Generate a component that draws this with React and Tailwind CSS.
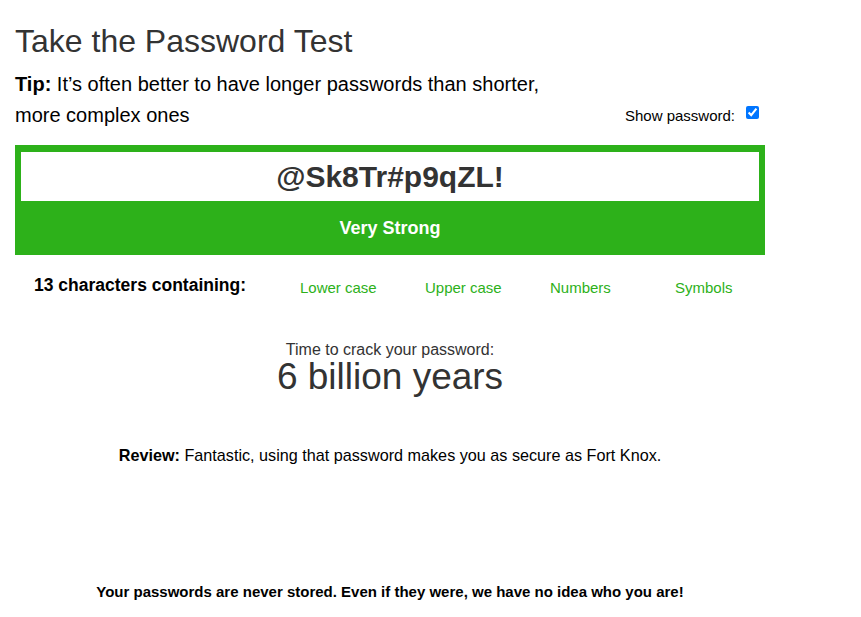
import React, { useState } from 'react';

const checks = ['Lower case', 'Upper case', 'Numbers', 'Symbols'];

const App = () => {
    const [password, setPassword] = useState('@Sk8Tr#p9qZL!');
    const [show, setShow] = useState(true);

    return (
        <div className="bg-white min-h-screen text-[#333] font-['Liberation_Sans',Arial,sans-serif]">
            <div className="w-[750px] ml-[15px] pt-[21px]">
                <h1 className="text-[32px] leading-[40px] text-[#333]">Take the Password Test</h1>

                <div className="flex items-end justify-between mt-[8px]">
                    <p className="text-[20px] leading-[31px] text-black w-[540px]">
                        <strong>Tip:</strong> It’s often better to have longer passwords than shorter, more complex ones
                    </p>
                    <label className="flex items-center gap-[11px] text-[15px] text-black mr-[6px] mb-[4px]">
                        Show password:
                        <input
                            type="checkbox"
                            checked={show}
                            onChange={() => setShow(!show)}
                            className="w-[13px] h-[13px] accent-[#0075ff] mb-[7px]"
                        />
                    </label>
                </div>

                <div className="mt-[14px] bg-[#2db11a] px-[6px] pt-[7px]">
                    <input
                        type={show ? 'text' : 'password'}
                        value={password}
                        onChange={(e) => setPassword(e.target.value)}
                        className="w-full h-[49px] bg-white text-center text-[30px] font-bold text-[#333] outline-none"
                    />
                    <div className="h-[54px] flex items-center justify-center text-white font-bold text-[18px]">
                        Very Strong
                    </div>
                </div>

                <div className="flex items-start mt-[17px]">
                    <div className="w-[285px] shrink-0 pl-[19px] text-[17.5px] font-bold text-black">
                        {password.length} characters containing:
                    </div>
                    <div className="flex text-[15px] text-[#2db11a] mt-[5px]">
                        {checks.map((c) => (
                            <span key={c} className="w-[125px] shrink-0">{c}</span>
                        ))}
                    </div>
                </div>

                <div className="flex flex-col items-center mt-[41px]">
                    <div className="text-[16px] leading-[18px]">Time to crack your password:</div>
                    <div className="text-[37px] leading-[36px]">6 billion years</div>
                </div>

                <p className="text-center text-[16.2px] text-black mt-[48px]">
                    <strong>Review:</strong> Fantastic, using that password makes you as secure as Fort Knox.
                </p>

                <p className="text-center text-[15px] font-bold text-black mt-[114px]">
                    Your passwords are never stored. Even if they were, we have no idea who you are!
                </p>
            </div>
        </div>
    );
};

export default App;
